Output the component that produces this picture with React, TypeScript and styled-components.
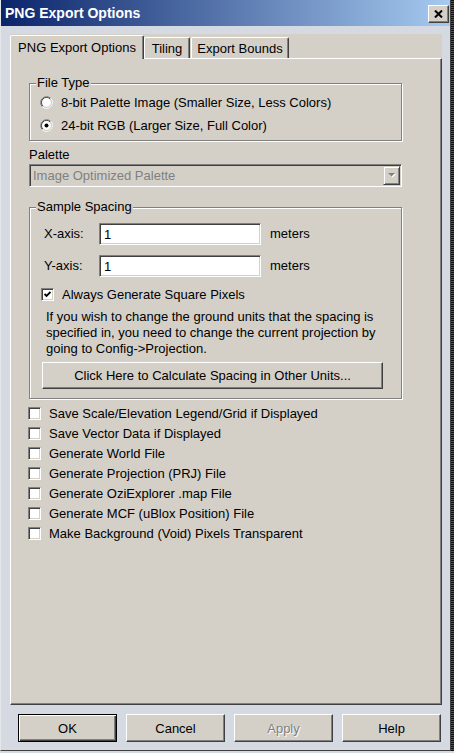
import { createGlobalStyle, styled } from "styled-components";

const GlobalStyle = createGlobalStyle`
  html, body {
    margin: 0;
    padding: 0;
  }
  body {
    background: #d5d9e1;
    font-family: "Liberation Sans", Arial, sans-serif;
    font-size: 13px;
    color: #000;
  }
`;

const Screen = styled.div`
  display: flex;
  align-items: flex-start;
`;

const Window = styled.div`
  width: 449px;
  height: 750px;
  display: flex;
  flex-direction: column;
  background: #d5d9e1;
  border-left: 1px solid #e4e6ea;
  border-right: 1px solid #404040;
  border-bottom: 1px solid #404040;
`;

// dotted edge of whatever sits behind the dialog
const Edge = styled.div`
  width: 3px;
  height: 751px;
  background: repeating-linear-gradient(
    to bottom,
    #111 0 1px,
    #3c4f86 1px 2px
  );
`;

const TitleBar = styled.div`
  height: 26px;
  display: flex;
  align-items: center;
  justify-content: space-between;
  padding: 0 1px 0 4px;
  background: linear-gradient(to right, #0a246a, #a6caf0);
`;

const Title = styled.span`
  color: #fff;
  font-weight: bold;
  font-size: 14px;
`;

const CloseButton = styled.div`
  width: 21px;
  height: 18px;
  box-sizing: border-box;
  display: flex;
  align-items: center;
  justify-content: center;
  background: #d4d0c8;
  border: 1px solid;
  border-color: #fff #404040 #404040 #fff;
  box-shadow: inset -1px -1px 0 #808080;
  margin-top: 2px;
`;

const Body = styled.div`
  display: flex;
  flex-direction: column;
  padding: 8px 8px 0 9px;
`;

const TabControl = styled.div`
  display: flex;
  flex-direction: column;
  background: #d4d0c8;
  padding-top: 1px;
`;

const TabStrip = styled.div`
  display: flex;
  align-items: flex-end;
  height: 23px;
`;

const Tab = styled.div<{ $active?: boolean; $width: number; $gap?: number }>`
  position: relative;
  z-index: ${(p) => (p.$active ? 1 : 0)};
  width: ${(p) => p.$width}px;
  height: ${(p) => (p.$active ? 24 : 21)}px;
  margin-left: ${(p) => p.$gap ?? 0}px;
  margin-bottom: ${(p) => (p.$active ? -1 : 0)}px;
  box-sizing: border-box;
  display: flex;
  align-items: center;
  justify-content: center;
  background: #d4d0c8;
  border-top: 1px solid #fff;
  border-left: 1px solid #fff;
  border-right: 1px solid #404040;
  box-shadow: inset -1px 0 0 #808080;
  border-radius: 2px 2px 0 0;
  padding-bottom: ${(p) => (p.$active ? 1 : 0)}px;
`;

const Page = styled.div`
  height: 647px;
  box-sizing: border-box;
  display: flex;
  flex-direction: column;
  padding-left: 17px;
  border: 1px solid;
  border-color: #fff #404040 #404040 #fff;
  box-shadow: inset -1px -1px 0 #808080;
`;

const Group = styled.fieldset<{ $top: number }>`
  width: 373px;
  box-sizing: border-box;
  margin: ${(p) => p.$top}px 0 0 1px;
  padding: 0;
  min-inline-size: 0;
  border: 1px solid #808080;
  box-shadow: inset 1px 1px 0 #fff, 1px 1px 0 #fff;
`;

const Legend = styled.legend`
  margin-left: 6px;
  padding: 0 1px;
  line-height: 14px;
  background: #d4d0c8;
`;

const GroupBody = styled.div<{ $pad: string }>`
  display: flex;
  flex-direction: column;
  padding: ${(p) => p.$pad};
`;

const OptionRow = styled.label<{ $height: number; $top?: number }>`
  height: ${(p) => p.$height}px;
  margin-top: ${(p) => p.$top ?? 0}px;
  display: flex;
  align-items: center;
  gap: 8px;
  white-space: nowrap;
`;

const CheckBox = styled.span`
  width: 13px;
  height: 13px;
  flex: none;
  box-sizing: border-box;
  border: 1px solid;
  border-color: #808080 #fff #fff #808080;
  box-shadow: inset 1px 1px 0 #404040, inset -1px -1px 0 #d4d0c8;
  background: #fff;
  display: flex;
  align-items: center;
  justify-content: center;
`;

const FieldLabel = styled.div`
  margin: 6px 0 0 1px;
  line-height: 15px;
`;

const Combo = styled.div`
  width: 373px;
  height: 23px;
  box-sizing: border-box;
  margin: 2px 0 0 1px;
  display: flex;
  align-items: center;
  justify-content: space-between;
  padding: 0 1px 0 3px;
  border: 1px solid;
  border-color: #808080 #fff #fff #808080;
  box-shadow: inset 1px 1px 0 #404040, inset -1px -1px 0 #d4d0c8;
  background: #d4d0c8;
  color: #808080;
`;

const ComboArrow = styled.div`
  width: 17px;
  height: 19px;
  box-sizing: border-box;
  display: flex;
  align-items: center;
  justify-content: center;
  border: 1px solid;
  border-color: #d4d0c8 #404040 #404040 #d4d0c8;
  box-shadow: inset 1px 1px 0 #fff, inset -1px -1px 0 #808080;
`;

const AxisRow = styled.div<{ $top: number }>`
  display: flex;
  align-items: center;
  height: 22px;
  margin-top: ${(p) => p.$top}px;
  padding-left: 3px;
`;

const AxisLabel = styled.span`
  width: 55px;
  margin-top: -2px;
`;

const TextBox = styled.div`
  width: 162px;
  height: 22px;
  box-sizing: border-box;
  display: flex;
  align-items: center;
  padding-left: 4px;
  margin-right: 9px;
  border: 1px solid;
  border-color: #808080 #fff #fff #808080;
  box-shadow: inset 1px 1px 0 #404040, inset -1px -1px 0 #d4d0c8;
  background: #fff;
`;

const Unit = styled.span`
  margin-top: -2px;
`;

const Note = styled.p`
  margin: 7px 0 0 5px;
  line-height: 16px;
`;

const Button = styled.div<{ $width: number; $height: number; $default?: boolean; $disabled?: boolean }>`
  width: ${(p) => p.$width}px;
  height: ${(p) => p.$height}px;
  box-sizing: border-box;
  display: flex;
  align-items: center;
  justify-content: center;
  background: #d4d0c8;
  color: ${(p) => (p.$disabled ? "#808080" : "#000")};
  text-shadow: ${(p) => (p.$disabled ? "1px 1px 0 #fff" : "none")};
  border: 1px solid;
  border-color: ${(p) => (p.$default ? "#000" : "#fff #404040 #404040 #fff")};
  box-shadow: ${(p) =>
    p.$default
      ? "inset 1px 1px 0 #fff, inset -1px -1px 0 #404040, inset -2px -2px 0 #808080"
      : "inset -1px -1px 0 #808080"};
`;

const SpacingButton = styled(Button)`
  margin: 5px 0 0 1px;
`;

const CheckList = styled.div`
  display: flex;
  flex-direction: column;
  margin-top: 4px;
`;

const ButtonRow = styled.div`
  display: flex;
  gap: 9px;
  margin: 9px 0 0 8px;
`;

const CloseIcon = () => (
  <svg width="9" height="8" viewBox="0 0 9 8">
    <path d="M1 0.5 L8 7.5 M8 0.5 L1 7.5" stroke="#000" strokeWidth="2" />
  </svg>
);

const CheckMark = () => (
  <svg width="7" height="7" viewBox="0 0 7 7">
    <path d="M0.5 3 L2.5 5 L6.5 1" stroke="#000" strokeWidth="1.8" fill="none" />
  </svg>
);

const DownArrow = () => (
  <svg width="8" height="5" viewBox="0 0 8 5">
    <path d="M1 1 H8 L4.5 4.5 Z" fill="#fff" />
    <path d="M0 0 H7 L3.5 3.5 Z" fill="#808080" />
  </svg>
);

// sunken classic radio: two-tone outer and inner rings, white well, black dot
const Radio = ({ checked = false }: { checked?: boolean }) => (
  <svg width="13" height="13" viewBox="0 0 13 13">
    <path d="M2.26 10.74 A6 6 0 0 1 10.74 2.26" stroke="#808080" fill="none" />
    <path d="M10.74 2.26 A6 6 0 0 1 2.26 10.74" stroke="#fff" fill="none" />
    <path d="M2.96 10.04 A5 5 0 0 1 10.04 2.96" stroke="#404040" fill="none" />
    <path d="M10.04 2.96 A5 5 0 0 1 2.96 10.04" stroke="#d4d0c8" fill="none" />
    <circle cx="6.5" cy="6.5" r="4.4" fill="#fff" />
    {checked && <circle cx="6.5" cy="6.5" r="2" fill="#000" />}
  </svg>
);

const extras = [
  "Save Scale/Elevation Legend/Grid if Displayed",
  "Save Vector Data if Displayed",
  "Generate World File",
  "Generate Projection (PRJ) File",
  "Generate OziExplorer .map File",
  "Generate MCF (uBlox Position) File",
  "Make Background (Void) Pixels Transparent",
];

export default function App() {
  return (
    <Screen>
      <GlobalStyle />
      <Window>
        <TitleBar>
          <Title>PNG Export Options</Title>
          <CloseButton>
            <CloseIcon />
          </CloseButton>
        </TitleBar>
        <Body>
          <TabControl>
            <TabStrip>
              <Tab $active $width={134}>PNG Export Options</Tab>
              <Tab $width={46}>Tiling</Tab>
              <Tab $width={98} $gap={1}>Export Bounds</Tab>
            </TabStrip>
            <Page>
              <Group $top={17}>
                <Legend>File Type</Legend>
                <GroupBody $pad="1px 0 3px 10px">
                  <OptionRow $height={23}>
                    <Radio />
                    8-bit Palette Image (Smaller Size, Less Colors)
                  </OptionRow>
                  <OptionRow $height={23}>
                    <Radio checked />
                    24-bit RGB (Larger Size, Full Color)
                  </OptionRow>
                </GroupBody>
              </Group>

              <FieldLabel>Palette</FieldLabel>
              <Combo>
                Image Optimized Palette
                <ComboArrow>
                  <DownArrow />
                </ComboArrow>
              </Combo>

              <Group $top={13}>
                <Legend>Sample Spacing</Legend>
                <GroupBody $pad="9px 0 9px 11px">
                  <AxisRow $top={0}>
                    <AxisLabel>X-axis:</AxisLabel>
                    <TextBox>1</TextBox>
                    <Unit>meters</Unit>
                  </AxisRow>
                  <AxisRow $top={10}>
                    <AxisLabel>Y-axis:</AxisLabel>
                    <TextBox>1</TextBox>
                    <Unit>meters</Unit>
                  </AxisRow>
                  <OptionRow $height={15} $top={10}>
                    <CheckBox>
                      <CheckMark />
                    </CheckBox>
                    Always Generate Square Pixels
                  </OptionRow>
                  <Note>
                    If you wish to change the ground units that the spacing is
                    <br />
                    specified in, you need to change the current projection by
                    <br />
                    going to Config-&gt;Projection.
                  </Note>
                  <SpacingButton $width={341} $height={27}>
                    Click Here to Calculate Spacing in Other Units...
                  </SpacingButton>
                </GroupBody>
              </Group>

              <CheckList>
                {extras.map((text) => (
                  <OptionRow key={text} $height={20}>
                    <CheckBox />
                    {text}
                  </OptionRow>
                ))}
              </CheckList>
            </Page>
          </TabControl>
          <ButtonRow>
            <Button $width={99} $height={28} $default>OK</Button>
            <Button $width={99} $height={28}>Cancel</Button>
            <Button $width={99} $height={28} $disabled>Apply</Button>
            <Button $width={99} $height={28}>Help</Button>
          </ButtonRow>
        </Body>
      </Window>
      <Edge />
    </Screen>
  );
}
